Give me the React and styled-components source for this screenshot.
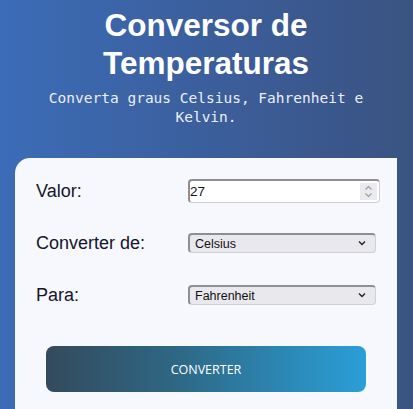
import React from 'react';
import styled, { createGlobalStyle } from 'styled-components';

const GlobalStyle = createGlobalStyle`
  html, body {
    margin: 0;
    padding: 0;
  }
  body {
    font-family: "Liberation Sans", Arial, sans-serif;
    background: linear-gradient(90deg, #3c6cb7 0%, #3b5c97 60%, #3a5381 100%);
    min-height: 100vh;
    overflow: hidden;
  }
`;

const Page = styled.div`
  width: 382px;
  margin: 0 auto 0 15px;
  padding-top: 6px;
`;

const Header = styled.header`
  text-align: center;
  color: #fff;
  margin-bottom: 31px;
`;

const Title = styled.h1`
  margin: 0;
  font-family: "Liberation Sans", Arial, sans-serif;
  font-weight: 700;
  font-size: 31.5px;
  line-height: 38px;
`;

const Subtitle = styled.p`
  margin: 7px 0 0;
  font-family: "DejaVu Sans Mono", "Liberation Mono", monospace;
  font-size: 14.5px;
  line-height: 19px;
  color: #eceef6;
  padding: 0 30px;
`;

const Card = styled.div`
  background: #f6f8fe;
  border-radius: 15px 0 0 0;
  padding: 21px 17px 18px 21px;
`;

const Form = styled.form`
  display: grid;
  grid-template-columns: 152px 1fr;
  grid-auto-rows: 24px;
  row-gap: 28px;
  align-items: center;
`;

const Label = styled.label`
  font-size: 18px;
  color: #15152b;
`;

const NumberBox = styled.div`
  display: flex;
  align-items: center;
  height: 24px;
  box-sizing: border-box;
  width: 192px;
  background: #fff;
  border: 1px solid #cfcfd4;
  border-top: 2px solid #8e8e94;
  border-left: 2px solid #8e8e94;
  border-radius: 4px;
  padding-right: 2px;
`;

const NumberInput = styled.input`
  flex: 1;
  min-width: 0;
  border: none;
  outline: none;
  background: transparent;
  padding: 0;
  font-family: "Liberation Sans", Arial, sans-serif;
  font-size: 13.5px;
  color: #111;
  -moz-appearance: textfield;
  &::-webkit-inner-spin-button,
  &::-webkit-outer-spin-button {
    -webkit-appearance: none;
    margin: 0;
  }
`;

const Spinner = styled.div`
  width: 17px;
  height: 17px;
  background: #ebebef;
  display: flex;
  align-items: center;
  justify-content: center;
`;

const SelectBox = styled.div`
  position: relative;
  width: 188px;
  height: 20px;
`;

const Select = styled.select`
  appearance: none;
  -webkit-appearance: none;
  width: 100%;
  height: 20px;
  box-sizing: border-box;
  background: #e9e8ed;
  border: 1px solid #d0d0d5;
  border-top: 2px solid #8e8e94;
  border-left: 2px solid #8e8e94;
  border-radius: 4px;
  padding: 0 0 0 5px;
  font-family: "Liberation Sans", Arial, sans-serif;
  font-size: 12.5px;
  color: #111;
  outline: none;
`;

const Chevron = styled.svg`
  position: absolute;
  right: 10px;
  top: 7px;
  pointer-events: none;
`;

const ButtonRow = styled.div`
  display: flex;
  justify-content: center;
  margin-top: 39px;
  padding-right: 4px;
`;

const ConvertButton = styled.button`
  width: 320px;
  height: 46px;
  border: none;
  border-radius: 8px;
  background: linear-gradient(90deg, #344a5c 0%, #2e6784 40%, #2a9fd8 100%);
  color: #fff;
  font-family: "Open Sans", "Liberation Sans", sans-serif;
  font-size: 12.5px;
  cursor: pointer;
`;

const ChevronIcon = () => (
  <Chevron width="8" height="6" viewBox="0 0 8 6">
    <path d="M1 1.5 L4 4.5 L7 1.5" fill="none" stroke="#222" strokeWidth="1.4" />
  </Chevron>
);

const UnitSelect = ({ value }) => (
  <SelectBox>
    <Select defaultValue={value}>
      <option value="Celsius">Celsius</option>
      <option value="Fahrenheit">Fahrenheit</option>
      <option value="Kelvin">Kelvin</option>
    </Select>
    <ChevronIcon />
  </SelectBox>
);

export default function App() {
  return (
    <>
      <GlobalStyle />
      <Page>
        <Header>
          <Title>Conversor de Temperaturas</Title>
          <Subtitle>Converta graus Celsius, Fahrenheit e Kelvin.</Subtitle>
        </Header>
        <Card>
          <Form onSubmit={(e) => e.preventDefault()}>
            <Label>Valor:</Label>
            <NumberBox>
              <NumberInput type="number" defaultValue="27" />
              <Spinner>
                <svg width="9" height="13" viewBox="0 0 9 13">
                  <path d="M1.5 4.5 L4.5 1.5 L7.5 4.5" fill="none" stroke="#9a9aa0" strokeWidth="1.1" />
                  <path d="M1.5 8.5 L4.5 11.5 L7.5 8.5" fill="none" stroke="#9a9aa0" strokeWidth="1.1" />
                </svg>
              </Spinner>
            </NumberBox>
            <Label>Converter de:</Label>
            <UnitSelect value="Celsius" />
            <Label>Para:</Label>
            <UnitSelect value="Fahrenheit" />
          </Form>
          <ButtonRow>
            <ConvertButton type="button">CONVERTER</ConvertButton>
          </ButtonRow>
        </Card>
      </Page>
    </>
  );
}
